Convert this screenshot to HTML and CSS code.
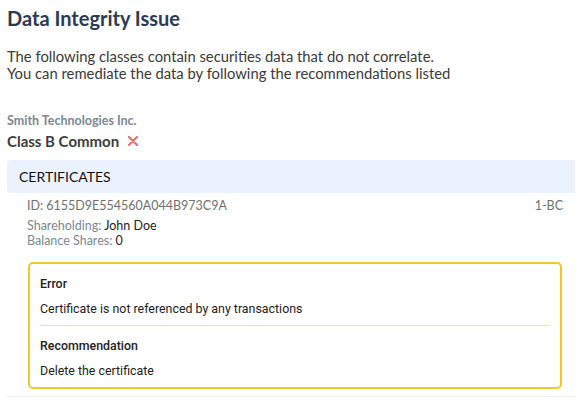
FILE: index.html
```html
<!DOCTYPE html>
<html lang="en">
<head>
  <meta charset="UTF-8">
  <title>Data Integrity Issue</title>
  <link rel="stylesheet" href="styles.css">
</head>
<body>
  <div class="page">
    <h1 class="title">Data Integrity Issue</h1>
    <p class="intro">
      The following classes contain securities data that do not correlate.<br>
      You can remediate the data by following the recommendations listed
    </p>

    <div class="company">Smith Technologies Inc.</div>
    <div class="class-name">
      Class B Common
      <svg class="close-icon" width="10" height="10" viewBox="0 0 10 10">
        <path d="M1 1 L9 9 M9 1 L1 9" stroke="#e8716f" stroke-width="2.2" stroke-linecap="round"/>
      </svg>
    </div>

    <div class="section-bar">CERTIFICATES</div>

    <div class="cert">
      <div class="cert-head">
        <span>ID: 6155D9E554560A044B973C9A</span>
        <span>1-BC</span>
      </div>
      <div class="cert-meta">
        <div>Shareholding: <span class="value">John Doe</span></div>
        <div>Balance Shares: <span class="value">0</span></div>
      </div>

      <div class="issue-box">
        <div class="issue-block">
          <div class="issue-label">Error</div>
          <div class="issue-text">Certificate is not referenced by any transactions</div>
        </div>
        <div class="issue-block">
          <div class="issue-label">Recommendation</div>
          <div class="issue-text">Delete the certificate</div>
        </div>
      </div>
    </div>
  </div>
</body>
</html>
```

FILE: styles.css
```css
:root {
  --title-color: #2c3a55;
  --text-color: #333333;
  --muted: #7b8794;
  --bar-bg: #ebf1fd;
  --warn: #f0c829;
  --warn-light: #f6e3a0;
}

body {
  margin: 0;
  background: #ffffff;
  font-family: 'Lato', sans-serif;
  color: var(--text-color);
}

.page {
  padding: 6px 8px 0 7px;
}

.title {
  margin: 0;
  font-size: 20px;
  font-weight: bold;
  color: var(--title-color);
  line-height: 24px;
}

.intro {
  margin: 18px 0 0;
  font-size: 14.8px;
  line-height: 17px;
  color: #3a3a3a;
}

.company {
  margin-top: 32px;
  font-size: 12.5px;
  font-weight: bold;
  color: var(--muted);
  line-height: 14px;
}

.class-name {
  display: flex;
  align-items: center;
  gap: 9px;
  margin-top: 4px;
  font-size: 15px;
  font-weight: bold;
  color: #3c3c3c;
  line-height: 18px;
}

.close-icon {
  display: block;
}

.section-bar {
  margin-top: 10px;
  background: var(--bar-bg);
  border-radius: 4px 0 0 4px;
  padding: 0 12px;
  height: 33px;
  line-height: 33px;
  font-size: 14px;
  color: #111111;
}

.cert {
  padding: 0 0 7px 18px;
  border-bottom: 1px solid #f1eeee;
}

.cert-head {
  display: flex;
  justify-content: space-between;
  padding: 5px 12px 0 2px;
  font-size: 12.5px;
  color: #6f6f6f;
  line-height: 15px;
}

.cert-meta {
  margin-top: 5px;
  padding-left: 2px;
  font-size: 12.5px;
  line-height: 15px;
  color: var(--muted);
}

.cert-meta .value {
  color: #222222;
}

.issue-box {
  margin: 14px 13px 0 3px;
  border: 2px solid var(--warn);
  border-radius: 5px;
  padding: 0 10px;
  font-family: 'Roboto', sans-serif;
  font-size: 12.4px;
  color: #222222;
}

.issue-block {
  padding: 12px 0 9px;
}

.issue-block + .issue-block {
  border-top: 1px solid var(--warn-light);
}

.issue-label {
  font-weight: 500;
  line-height: 15px;
}

.issue-text {
  margin-top: 10px;
  line-height: 15px;
}
```
